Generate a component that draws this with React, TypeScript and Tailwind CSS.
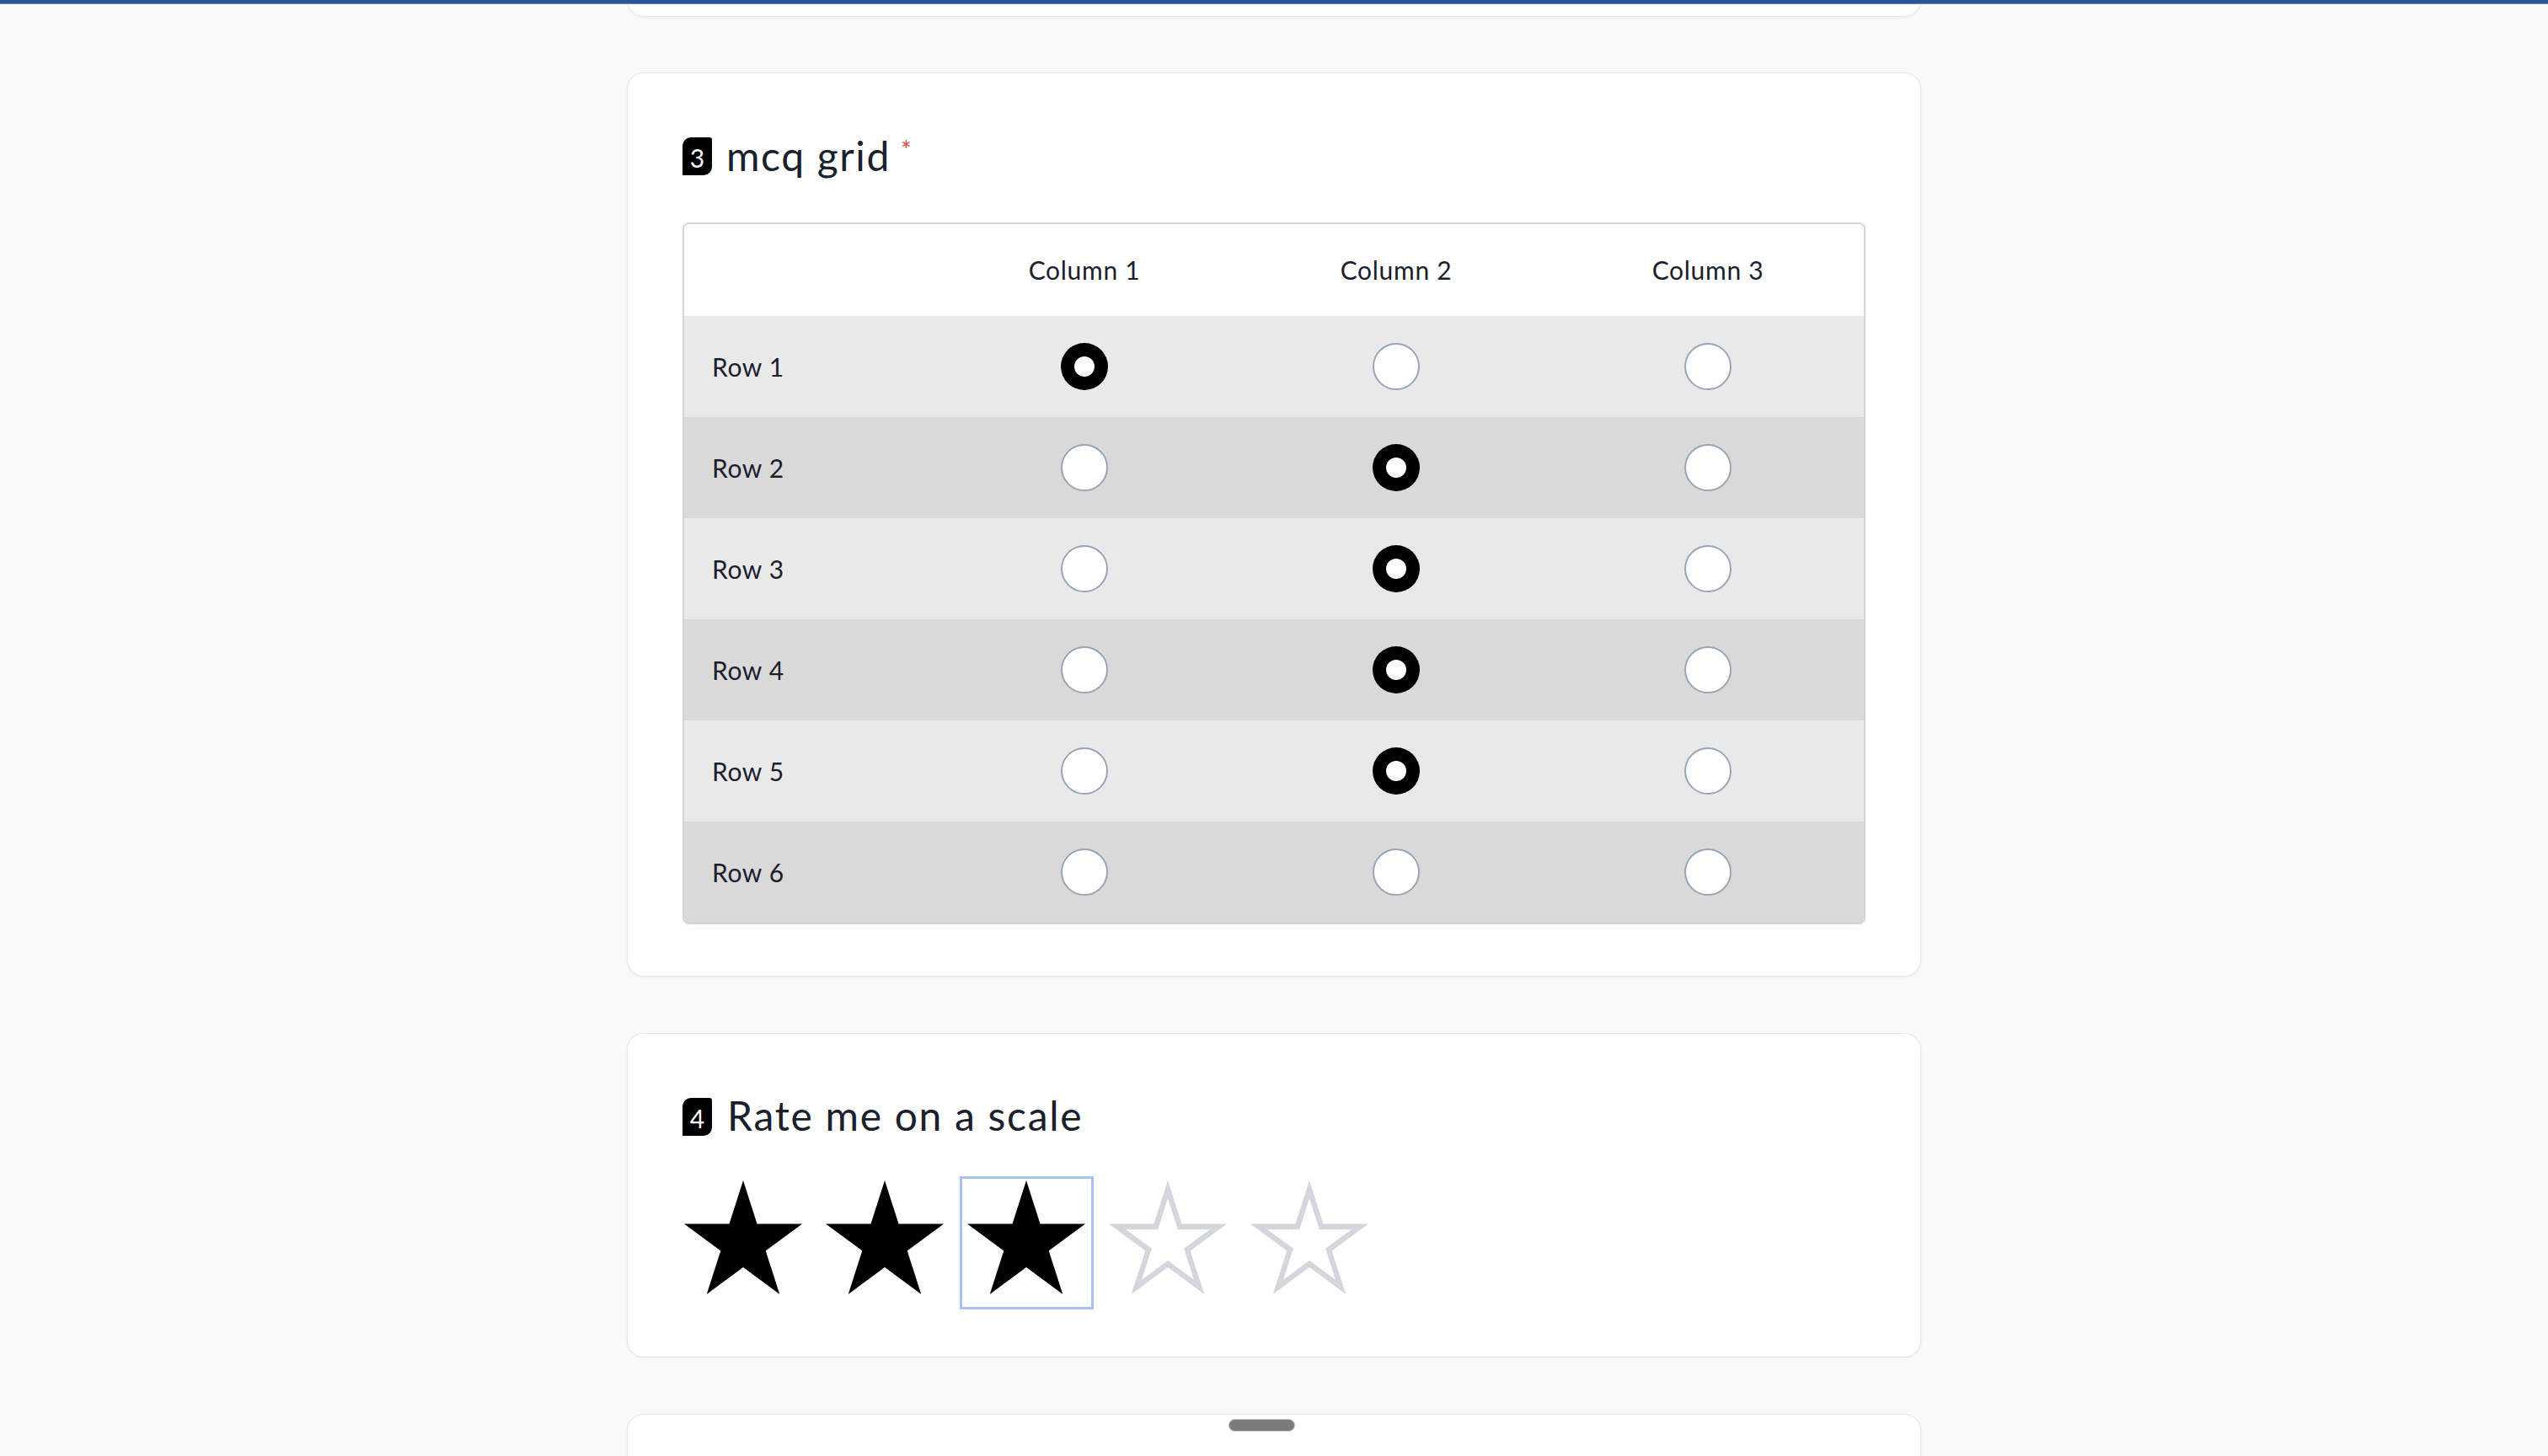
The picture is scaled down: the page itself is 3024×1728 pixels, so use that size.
import React from "react";

const STAR_PTS =
  "70,0 86.52,50.87 140,50.86 96.73,82.28 113.26,133.14 70,101.7 26.74,133.14 43.27,82.28 0,50.86 53.48,50.87";

function Star({ filled, id }: { filled: boolean; id: string }) {
  return (
    <svg width="140" height="135" viewBox="0 0 140 133.2" preserveAspectRatio="none" className="block">
      {filled ? (
        <polygon points={STAR_PTS} fill="#000000" />
      ) : (
        <>
          <defs>
            <clipPath id={id}>
              <polygon points={STAR_PTS} />
            </clipPath>
          </defs>
          <polygon
            points={STAR_PTS}
            fill="none"
            stroke="#d3d6dc"
            strokeWidth="13"
            clipPath={`url(#${id})`}
          />
        </>
      )}
    </svg>
  );
}

function Radio({ checked }: { checked: boolean }) {
  return checked ? (
    <div className="w-[56px] h-[56px] rounded-full bg-black flex items-center justify-center">
      <div className="w-[24px] h-[24px] rounded-full bg-white" />
    </div>
  ) : (
    <div className="w-[56px] h-[56px] rounded-full bg-white border-2 border-[#98a5b9]" />
  );
}

function Badge({ n }: { n: string }) {
  return (
    <div className="w-[35px] h-[45px] bg-black text-white rounded-tl-[10px] rounded-br-[10px] rounded-tr-[3px] flex items-center justify-center text-[30px] leading-none pt-[2px]">
      {n}
    </div>
  );
}

const rows = [
  { label: "Row 1", sel: 0 },
  { label: "Row 2", sel: 1 },
  { label: "Row 3", sel: 1 },
  { label: "Row 4", sel: 1 },
  { label: "Row 5", sel: 1 },
  { label: "Row 6", sel: -1 },
];

export default function App() {
  return (
    <div className="relative h-[1728px] overflow-hidden bg-[#f8f9fb] font-[Lato,'Liberation_Sans',sans-serif] text-[#1a202c]">
      {/* top progress bar */}
      <div className="absolute top-0 left-0 right-0 z-10">
        <div className="h-[4px] bg-[#2b5296]" />
        <div className="h-[1px] bg-[#6a86b8]" />
      </div>

      <div className="w-[1536px] mx-auto flex flex-col">
        {/* previous card (cut off) */}
        <div className="h-[200px] -mt-[180px] bg-white border border-[#e4e6ea] rounded-[20px] shadow-[0_1px_3px_rgba(0,0,0,0.05)]" />

        {/* mcq grid card */}
        <div className="mt-[66px] bg-white border border-[#e4e6ea] rounded-[20px] shadow-[0_1px_3px_rgba(0,0,0,0.05)] px-[65px] pt-[76px] pb-[61px]">
          <div className="flex items-center h-[45px]">
            <Badge n="3" />
            <span className="ml-[17px] text-[48px] leading-[45px] tracking-[1.6px] -mt-[3px]">mcq grid</span>
            <span className="ml-[12px] self-start -mt-[1px] text-[30px] leading-none text-[#e04848]">*</span>
          </div>

          <div className="mt-[56px] border-2 border-[#d4d4d4] rounded-[8px] overflow-hidden">
            <div className="grid grid-cols-[290px_1fr_1fr_1fr] h-[109px] bg-white items-center text-[30px] tracking-[0.7px]">
              <div />
              <div className="text-center">Column 1</div>
              <div className="text-center">Column 2</div>
              <div className="text-center">Column 3</div>
            </div>
            {rows.map((r, i) => (
              <div
                key={r.label}
                className={`grid grid-cols-[290px_1fr_1fr_1fr] h-[120px] items-center ${
                  i % 2 === 0 ? "bg-[#e9e9e9]" : "bg-[#d9d9d9]"
                }`}
              >
                <div className="pl-[33px] text-[30px] tracking-[0.6px]">{r.label}</div>
                {[0, 1, 2].map((c) => (
                  <div key={c} className="flex justify-center">
                    <Radio checked={r.sel === c} />
                  </div>
                ))}
              </div>
            ))}
          </div>
        </div>

        {/* rating card */}
        <div className="mt-[67px] bg-white border border-[#e4e6ea] rounded-[20px] shadow-[0_1px_3px_rgba(0,0,0,0.05)] px-[65px] pt-[76px] pb-[56px]">
          <div className="flex items-center h-[45px]">
            <Badge n="4" />
            <span className="ml-[18px] text-[48px] leading-[45px] tracking-[1.7px] -mt-[5px]">Rate me on a scale</span>
          </div>
          <div className="mt-[48px] -ml-[7px] flex gap-[9px]">
            {[0, 1, 2, 3, 4].map((i) => (
              <button
                key={i}
                className={`w-[159px] h-[158px] border-[3px] pl-[6px] pt-[2px] flex items-start justify-start ${
                  i === 2 ? "border-[#a7c0f5]" : "border-transparent"
                }`}
              >
                <Star filled={i < 3} id={`star-clip-${i}`} />
              </button>
            ))}
          </div>
        </div>

        {/* next card (cut off) */}
        <div className="mt-[67px] h-[400px] bg-white border border-[#e4e6ea] rounded-[20px] shadow-[0_1px_3px_rgba(0,0,0,0.05)]" />
      </div>

      {/* drag handle */}
      <div className="absolute left-[1458px] top-[1684px] w-[79px] h-[15px] rounded-full bg-[#7b7b7b] border border-[#c4c4c4]" />
    </div>
  );
}
